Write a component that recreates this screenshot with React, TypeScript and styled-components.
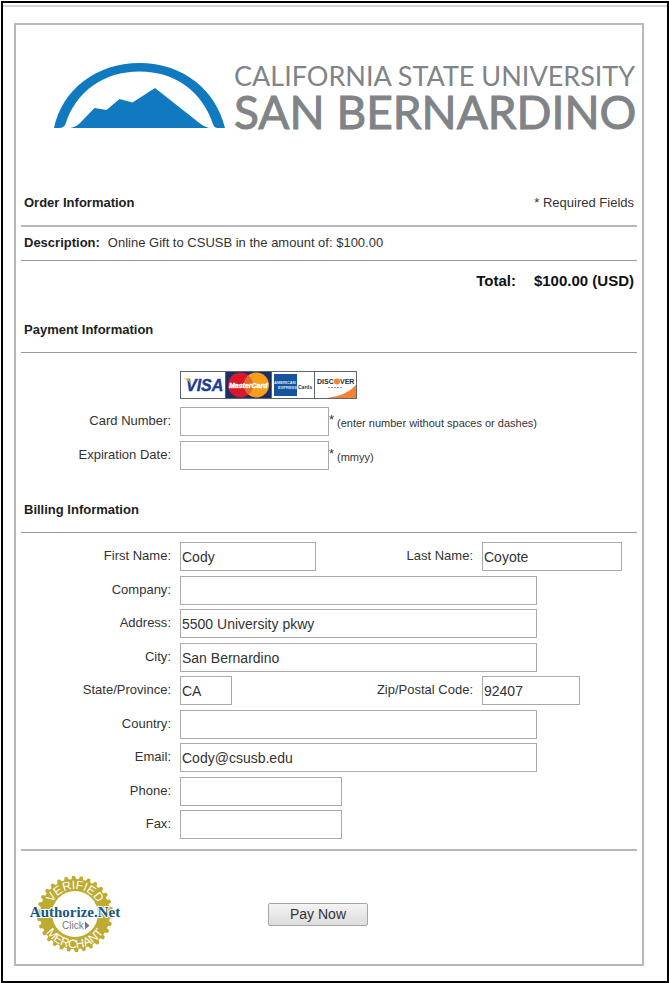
import React from "react";
import styled, { createGlobalStyle } from "styled-components";

const GlobalStyle = createGlobalStyle`
  * { box-sizing: border-box; }
  body {
    margin: 0;
    background: #fff;
    color: #333;
    font-family: "Liberation Sans", Arial, sans-serif;
    font-size: 13px;
    line-height: 20px;
  }
`;

const Frame = styled.div`
  margin: 1px 0 0 1px;
  border: 2px solid #000;
  padding: 2px 0 15px;
`;

const TopRule = styled.div`
  height: 2px;
  background: #d4d4d4;
`;

const Panel = styled.form`
  margin: 16px 23px 0 11px;
  border: 2px solid #b8b8b8;
  padding: 0 5px;
`;

const Header = styled.header`
  display: flex;
  align-items: flex-start;
  gap: 9px;
  padding: 38px 0 58px 33px;
`;

const Mark = styled.svg`
  flex: none;
  width: 171px;
  height: 66px;
`;

const Wordmark = styled.h1`
  margin: 0;
  color: #808487;
  font-family: Lato, "Liberation Sans", sans-serif;
  font-weight: 400;
  white-space: nowrap;
`;

const WordTop = styled.span`
  display: block;
  font-size: 27px;
  line-height: 26px;
`;

const WordBottom = styled.span`
  display: block;
  font-size: 46px;
  line-height: 46px;
  -webkit-text-stroke: 1px #808487;
`;

const SectionHead = styled.div<{ $soft?: boolean }>`
  display: flex;
  justify-content: space-between;
  padding: 0 3px 12px;
  border-bottom: ${(p) => (p.$soft ? "2px solid #b8b8b8" : "1px solid #999")};
`;

const SectionTitle = styled.h2`
  margin: 0;
  color: #222;
  font-size: 13px;
  font-weight: bold;
`;

const Description = styled.div`
  display: flex;
  gap: 8px;
  padding: 6px 3px 7px;
  border-bottom: 1px solid #999;
`;

const Strong = styled.strong`
  color: #222;
`;

const Total = styled.div`
  display: flex;
  justify-content: flex-end;
  gap: 18px;
  padding: 10px 3px 29px;
  color: #111;
  font-size: 15px;
  font-weight: bold;
`;

const Fields = styled.div<{ $last?: boolean }>`
  display: grid;
  grid-template-columns: 150px minmax(0, 1fr) 98px 155px;
  grid-auto-rows: 34px 33px;
  column-gap: 9px;
  padding: ${(p) => (p.$last ? "9px 0 5px" : "8px 0 26px")};
  border-bottom: ${(p) => (p.$last ? "2px solid #b8b8b8" : "0")};
`;

const Label = styled.label`
  padding-top: 4px;
  text-align: right;
  white-space: nowrap;
`;

const Cell = styled.div<{ $span?: number }>`
  display: flex;
  align-items: flex-start;
  grid-column: span ${(p) => p.$span ?? 1};
`;

const Input = styled.input<{ $width: number }>`
  width: ${(p) => p.$width}px;
  max-width: 100%;
  height: 29px;
  padding: 0 1px;
  border: 1px solid #aaa;
  border-radius: 0;
  background: #fff;
  color: #333;
  font: 14px "Liberation Sans", Arial, sans-serif;
  outline: none;
`;

const Note = styled.span`
  padding: 6px 0 0 8px;
  font-size: 11px;
`;

const Star = styled.span`
  width: 0;
  padding-top: 3px;
`;

const CardRow = styled.div`
  padding: 18px 0 0 159px;
`;

const CardStrip = styled.svg`
  display: block;
  width: 177px;
  height: 28px;
`;

const Footer = styled.footer`
  display: flex;
  align-items: center;
  gap: 145px;
  padding: 25px 0 12px 8px;
`;

const SealLink = styled.a`
  display: block;
`;

const Seal = styled.svg`
  display: block;
  width: 94px;
  height: 76px;
`;

const PayButton = styled.button`
  width: 100px;
  height: 23px;
  padding: 0;
  border: 1px solid #a6a6a6;
  border-radius: 2px;
  background: linear-gradient(#f4f4f4, #dcdcdc);
  color: #333;
  font: 14px "Liberation Sans", Arial, sans-serif;
`;

function UniversityMark() {
  return (
    <Mark viewBox="0 0 171 66" fill="#0f7ac0" aria-hidden="true">
      <path d="M0 65 C8 27 42 0 85.500 0 S162 27 171 65 H164 Q160 65 159 61 C148 28 121 8.500 85.500 8.500 S22 28 11.500 61 Q10 65 5 65Z" />
      <path d="M16.500 65 Q22 64 26 60 L40.500 45 L52.500 47 L65.500 36 L78.500 39.500 L101 25 L146 60.500 Q150 64 155 65Z" />
    </Mark>
  );
}

function Cards() {
  return (
    <CardStrip viewBox="0 0 177 28" role="img" aria-label="Accepted cards" fontFamily="Liberation Sans, Arial, sans-serif">
      <rect width="177" height="28" fill="#5d646b" />
      <rect x="1" y="1" width="44" height="26" fill="#fff" />
      <text x="6" y="20" fontSize="16" fontWeight="bold" fontStyle="italic" fill="#1d3c97" stroke="#1d3c97" strokeWidth="0.4">VISA</text>
      <path d="M3.500 7.500H9L11 13.500Q8.500 8.500 3.500 7.500Z" fill="#e6a52a" />
      <rect x="46" y="1" width="45" height="26" fill="#1c2f63" />
      <circle cx="60.500" cy="14" r="12.500" fill="#d8172a" />
      <circle cx="76.500" cy="14" r="12.500" fill="#f79e1b" />
      <path d="M68.500 4.400A12.500 12.500 0 0 1 68.500 23.600A12.500 12.500 0 0 1 68.500 4.400Z" fill="#e4682a" />
      <text x="49" y="17" fontSize="7" fontWeight="bold" fontStyle="italic" fill="#fff" stroke="#fff" strokeWidth="0.4">MasterCard</text>
      <rect x="92" y="1" width="42" height="26" fill="#fff" />
      <rect x="94" y="3" width="23" height="22" fill="#17549e" />
      <text x="94" y="13" fontSize="4" fontWeight="bold" fill="#d8e7f5">AMERICAN</text>
      <text x="98" y="18" fontSize="4" fontWeight="bold" fill="#d8e7f5">EXPRESS</text>
      <text x="118" y="18" fontSize="5" fontWeight="bold" fill="#1b3556">Cards</text>
      <rect x="135" y="1" width="41" height="26" fill="#fff" />
      <path d="M147 27Q166 25 176 14V27Z" fill="#f58233" />
      <text x="137" y="13" fontSize="7" fontWeight="bold" fill="#2b2b2b">DISC</text>
      <circle cx="157" cy="10.500" r="3" fill="#f58233" />
      <text x="160" y="13" fontSize="7" fontWeight="bold" fill="#2b2b2b">VER</text>
      <path d="M148 16.500H162" stroke="#999" strokeDasharray="2 1" />
    </CardStrip>
  );
}

const TEETH = 30;
const gear = Array.from({ length: TEETH }, (_, i) => {
  const step = (Math.PI * 2) / TEETH;
  const point = (radius: number, offset: number) => {
    const angle = (i + offset) * step;
    return `${(46 + radius * Math.cos(angle)).toFixed(1)} ${(38 + radius * Math.sin(angle)).toFixed(1)}`;
  };
  return `${i ? "L" : "M"}${point(35, 0)}L${point(38, 0.15)}L${point(38, 0.5)}L${point(35, 0.65)}`;
}).join("");

function MerchantSeal() {
  return (
    <Seal viewBox="0 0 94 76" role="img" aria-label="Authorize.Net verified merchant">
      <defs>
        <path id="seal-top" d="M21 38A25 25 0 0 1 71 38" />
        <path id="seal-bottom" d="M12 38A34 34 0 0 0 80 38" />
      </defs>
      <path d={`${gear}Z`} fill="#beac32" />
      <circle cx="46" cy="38" r="23" fill="#fff" />
      <g fontFamily="Liberation Sans, Arial, sans-serif" fontSize="12" fill="#fff" textAnchor="middle">
        <text><textPath href="#seal-top" startOffset="50%">VERIFIED</textPath></text>
        <text><textPath href="#seal-bottom" startOffset="50%">MERCHANT</textPath></text>
      </g>
      <text x="46" y="41" fontFamily="Liberation Serif, serif" fontSize="15" fontWeight="bold" fill="#17587f" stroke="#fff" strokeWidth="2" paintOrder="stroke" textAnchor="middle">Authorize.Net</text>
      <text x="33" y="53" fontFamily="Liberation Sans, Arial, sans-serif" fontSize="10" fill="#777">Click</text>
      <path d="M56 45.500L60.500 49.500L56 53.500Z" fill="#777" />
    </Seal>
  );
}

interface FieldProps {
  id: string;
  label: string;
  width: number;
  value?: string;
  span?: number;
  note?: string;
}

function Field({ id, label, width, value = "", span = 1, note }: FieldProps) {
  return (
    <>
      <Label htmlFor={id}>{label}:</Label>
      <Cell $span={span}>
        <Input id={id} name={id} type="text" defaultValue={value} $width={width} />
        {note && <Star>*</Star>}
        {note && <Note>{note}</Note>}
      </Cell>
    </>
  );
}

export default function App() {
  return (
    <>
      <GlobalStyle />
      <Frame>
        <TopRule />
        <Panel onSubmit={(e: React.FormEvent) => e.preventDefault()}>
          <Header>
            <UniversityMark />
            <Wordmark>
              <WordTop>CALIFORNIA STATE UNIVERSITY</WordTop>
              <WordBottom>SAN BERNARDINO</WordBottom>
            </Wordmark>
          </Header>

          <SectionHead $soft>
            <SectionTitle>Order Information</SectionTitle>
            <span>* Required Fields</span>
          </SectionHead>
          <Description>
            <Strong>Description:</Strong>
            <span>Online Gift to CSUSB in the amount of: $100.00</span>
          </Description>
          <Total>
            <span>Total:</span>
            <span>$100.00 (USD)</span>
          </Total>

          <SectionHead>
            <SectionTitle>Payment Information</SectionTitle>
          </SectionHead>
          <CardRow>
            <Cards />
          </CardRow>
          <Fields>
            <Field id="cardNumber" label="Card Number" width={149} span={3} note="(enter number without spaces or dashes)" />
            <Field id="expiration" label="Expiration Date" width={149} span={3} note="(mmyy)" />
          </Fields>

          <SectionHead>
            <SectionTitle>Billing Information</SectionTitle>
          </SectionHead>
          <Fields $last>
            <Field id="firstName" label="First Name" width={136} value="Cody" />
            <Field id="lastName" label="Last Name" width={140} value="Coyote" />
            <Field id="company" label="Company" width={357} span={3} />
            <Field id="address" label="Address" width={357} span={3} value="5500 University pkwy" />
            <Field id="city" label="City" width={357} span={3} value="San Bernardino" />
            <Field id="state" label="State/Province" width={52} value="CA" />
            <Field id="zip" label="Zip/Postal Code" width={98} value="92407" />
            <Field id="country" label="Country" width={357} span={3} />
            <Field id="email" label="Email" width={357} span={3} value="Cody@csusb.edu" />
            <Field id="phone" label="Phone" width={162} span={3} />
            <Field id="fax" label="Fax" width={162} span={3} />
          </Fields>

          <Footer>
            <SealLink href="#verify">
              <MerchantSeal />
            </SealLink>
            <PayButton type="submit">Pay Now</PayButton>
          </Footer>
        </Panel>
      </Frame>
    </>
  );
}
